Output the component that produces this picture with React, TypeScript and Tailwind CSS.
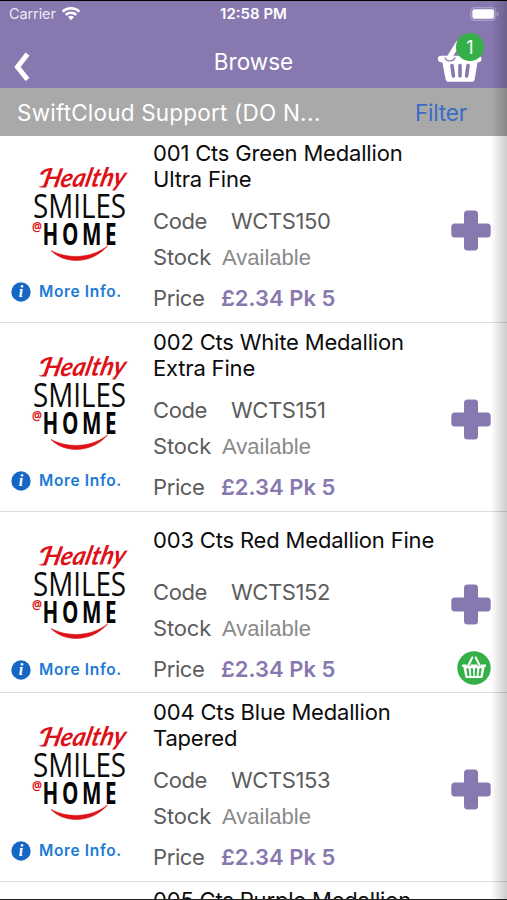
import React from 'react';

type Product = {
  title: string[];
  code: string;
  inBasket?: boolean;
};

const products: Product[] = [
  { title: ['001 Cts Green Medallion', 'Ultra Fine'], code: 'WCTS150' },
  { title: ['002 Cts White Medallion', 'Extra Fine'], code: 'WCTS151' },
  { title: ['003 Cts Red Medallion Fine'], code: 'WCTS152', inBasket: true },
  { title: ['004 Cts Blue Medallion', 'Tapered'], code: 'WCTS153' },
];

function Wifi() {
  return (
    <svg width="20" height="16" viewBox="0 0 20 16" fill="none" stroke="#fff" strokeWidth="2.6">
      <path d="M1.6 5.600a12.2 12.2 0 0 1 16.8 0" />
      <path d="M4.7 8.900a7.8 7.8 0 0 1 10.6 0" />
      <path d="M7 11.100a4.5 4.5 0 0 1 6 0L10 14.200z" fill="#fff" stroke="none" />
    </svg>
  );
}

function Battery() {
  return (
    <svg width="30" height="14" viewBox="0 0 30 14">
      <rect x="0.8" y="0.8" width="25" height="12.4" rx="3.6" fill="none" stroke="#b5a9d0" strokeWidth="1.1" />
      <rect x="2.4" y="2.3" width="21.8" height="9.4" rx="2" fill="#fff" />
      <path d="M27.2 4.6c2 .8 2 4 0 4.8z" fill="#b5a9d0" />
    </svg>
  );
}

function HeaderBasket() {
  return (
    <svg className="block" width="46" height="43" viewBox="0 0 46 43">
      <path
        d="M4.200 15.700h36.800a3.300 3.300 0 0 1 .3 6.600h-.8L37.700 39c-.3 1.900-1.200 2.800-3 2.800H11.600c-1.800 0-2.700-.9-3-2.800L5.300 22.300H4.200a3.300 3.300 0 0 1 0-6.600z"
        fill="#fff"
      />
      <path d="M8 17.500c.8 4.200 8.500 5 10-.2" fill="none" stroke="#8878b0" strokeWidth="1.300" />
      <path d="M21 3.500 12.600 17" stroke="#fff" strokeWidth="5.200" strokeLinecap="round" />
      <path d="m15 25.500 1.400 10.500M23 25.500V36M31 25.500 29.600 36" stroke="#8878b0" strokeWidth="3.600" strokeLinecap="round" />
    </svg>
  );
}

function SmallBasket() {
  return (
    <svg className="block" width="34" height="34" viewBox="0 0 34 34" fill="none">
      <circle cx="17" cy="17" r="16.700" fill="#35b048" />
      <path d="m11.300 14.500 4-8M22.700 14.500l-4-8" stroke="#fff" strokeWidth="2" strokeLinecap="round" />
      <path d="M5 13.400h4.700c.5 2.600 3.700 2.600 4.200 0h6.200c.5 2.600 3.700 2.600 4.200 0H29v2.300h-1.300l-2 10c-.2 1-.7 1.400-1.600 1.400H9.900c-.9 0-1.400-.4-1.600-1.400l-2-10H5z" fill="#fff" />
      <path d="m10.500 18 1 6.200M14.900 18l.4 6.200M19.100 18l-.4 6.200M23.500 18l-1 6.200" stroke="#35b048" strokeWidth="2.200" strokeLinecap="round" />
    </svg>
  );
}

function Logo() {
  return (
    <svg className="block overflow-visible" width="100" height="100" viewBox="0 0 100 100">
      <g transform="translate(12 26.500) rotate(-1) skewX(-14)">
        <text x="0" y="0" textLength="82" lengthAdjust="spacingAndGlyphs" fontSize="26" fontWeight="700" fontStyle="italic" fill="#dc1218" className="font-['Lato',sans-serif]">Healthy</text>
      </g>
      <path d="M10 13.500c1-4 6-6.500 12.500-6.500l-.8 2.200c-4 .2-7.500 1.500-8.500 4.600zM8.500 25c3 1.200 6-.4 8-4l1.500 1c-2.500 4.500-6.500 6-9.500 3z" fill="#dc1218" />
      <text x="3" y="56.500" textLength="93" lengthAdjust="spacingAndGlyphs" fontSize="32" fill="#0b0b0b" className="font-['Open_Sans',sans-serif]">SMILES</text>
      <text x="2" y="70" textLength="10" lengthAdjust="spacingAndGlyphs" fontSize="12" fontWeight="700" fill="#dc1218" className="font-['Open_Sans',sans-serif]">@</text>
      <g transform="translate(12.500 83.500) scale(.7 1)" fontSize="29.500" fontWeight="700" fill="#050505" className="font-['Open_Sans',sans-serif]">
        <text x="0" y="0" textLength="106">HOME</text>
      </g>
      <path d="M21 89.500c16 8.600 40 8.500 56.500-4.500C61 104 34 103 21 89.500z" fill="#dc1218" stroke="#dc1218" strokeWidth=".6" />
    </svg>
  );
}

function Plus() {
  return (
    <svg className="block" width="40" height="41" viewBox="0 0 40 41" fill="#8878b0">
      <rect x="13" y="0.500" width="14" height="40" rx="3.500" />
      <rect x="0.300" y="13.500" width="39.400" height="14" rx="3.500" />
    </svg>
  );
}

function Info() {
  return (
    <svg className="block" width="20" height="20" viewBox="0 0 20 20">
      <circle cx="10" cy="10" r="9.700" fill="#1567c3" />
      <text x="10" y="15.300" textAnchor="middle" fontSize="16" fontWeight="700" fontStyle="italic" fill="#fff" className="font-['Liberation_Serif',serif]">i</text>
    </svg>
  );
}

function ProductRow({ product }: { product: Product }) {
  const single = product.title.length === 1;
  return (
    <li className={`flex shrink-0 border-b border-[#dcdcdc] ${single ? 'h-[181px]' : 'h-[189px]'}`}>
      <div className="w-[153px] shrink-0 pt-[27px]">
        <div className="pl-[30px]">
          <Logo />
        </div>
        <div className="mt-5 flex items-center gap-[8px] pl-[11px]">
          <Info />
          <span className="pt-px text-[15.500px] leading-5 font-semibold tracking-[0.650px] text-[#1b7ad4]">More Info.</span>
        </div>
      </div>
      <div className="w-[297px] shrink-0 tracking-[-0.180px] whitespace-nowrap text-[#5c5c5c]">
        <h2 className={`text-[22px] leading-[26px] text-[#0c0c0c] ${single ? 'pt-[15px]' : 'pt-[6px]'}`}>
          {product.title.map((line) => (
            <span key={line} className="block">{line}</span>
          ))}
        </h2>
        <div className={`flex h-7 items-center text-[22px] tracking-[-0.400px] ${single ? 'mt-[25px]' : 'mt-[15px]'}`}>
          <span className="w-[78px]">Code</span>
          <span>{product.code}</span>
        </div>
        <div className="mt-[8px] flex h-7 items-center text-[22px]">
          <span className="w-[69px]">Stock</span>
          <span className="pt-px font-['Liberation_Sans',sans-serif] text-[22px] tracking-normal text-[#8a8a8a]">Available</span>
        </div>
        <div className="mt-[13px] flex h-7 items-center text-[22px]">
          <span className="w-[68px] tracking-[-0.400px]">Price</span>
          <span className="font-semibold tracking-normal text-[#8878b0]">£2.34 Pk 5</span>
        </div>
      </div>
      <div className="relative flex w-[57px] items-center pt-1 pl-[1px]">
        <Plus />
        {product.inBasket && (
          <div className="absolute top-[139px] left-[7px]">
            <SmallBasket />
          </div>
        )}
      </div>
    </li>
  );
}

export default function App() {
  return (
    <main className="relative flex h-[900px] w-[507px] flex-col overflow-hidden bg-white font-['Inter',sans-serif]">
      <header className="z-10 h-[88px] shrink-0 border-t border-black bg-[#8878b0] text-white">
        <div className="grid h-[26px] grid-cols-3 items-center pr-[7px] pl-[9px] text-[14.500px]">
          <div className="flex items-center gap-[5px]">
            <span className="tracking-[-0.100px] text-[#ece8f5]">Carrier</span>
            <Wifi />
          </div>
          <span className="pr-[2px] text-center text-[15px] font-semibold whitespace-nowrap">12:58 PM</span>
          <div className="flex justify-end">
            <Battery />
          </div>
        </div>
        <div className="flex h-[61px] items-center justify-between pr-[24px] pl-[14px]">
          <svg className="mt-[19px]" width="56" height="30" viewBox="0 0 56 30" fill="none" stroke="#fff" strokeWidth="5">
            <path d="M13.500 2 3.500 15l10 12.500" />
          </svg>
          <h1 className="mt-[8px] text-[22.500px]">Browse</h1>
          <div className="relative mt-[8px]">
            <HeaderBasket />
            <span className="absolute -top-[7px] left-[19px] flex h-[28px] w-[28px] items-center justify-center rounded-full bg-[#35b048] text-[18px]">1</span>
          </div>
        </div>
      </header>
      <div className="z-10 flex h-[48px] shrink-0 items-center justify-between bg-[#a9a9a9] pr-10 pl-[17px] text-[22.500px]">
        <span className="pt-px tracking-[0.200px] text-white">SwiftCloud Support (DO N<span className="tracking-[0.500px]">...</span></span>
        <span className="pt-px tracking-[-0.200px] text-[#3b6cc9]">Filter</span>
      </div>
      <ul className="-mt-[2px] flex min-h-0 flex-1 flex-col overflow-hidden">
        {products.map((product) => (
          <ProductRow key={product.code} product={product} />
        ))}
        <li className="h-[18px] shrink-0 overflow-hidden pt-[5px] pl-[153px] text-[22px] leading-[26px] tracking-[-0.180px] text-[#0c0c0c]">
          005 Cts Purple Medallion
        </li>
      </ul>
      <div className="pointer-events-none absolute inset-y-0 right-0 z-20 w-[16px] bg-linear-to-r from-black/0 to-black/20" />
      <div className="pointer-events-none absolute inset-x-0 bottom-0 z-20 h-px bg-[#222]" />
    </main>
  );
}
